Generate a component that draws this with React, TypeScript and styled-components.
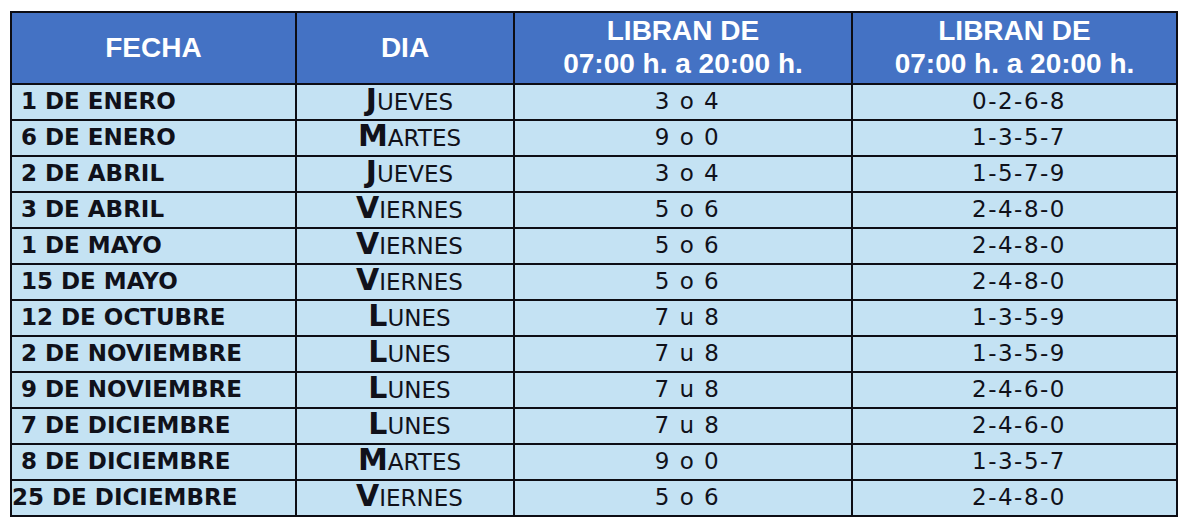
import styled, { createGlobalStyle } from "styled-components";

const GlobalStyle = createGlobalStyle`
  html, body {
    margin: 0;
    padding: 0;
    background: #ffffff;
  }
`;

const Page = styled.div`
  padding: 11px 0 0 10px;
`;

const Table = styled.table`
  border-collapse: collapse;
  table-layout: fixed;
  width: 1166px;
  border: 2px solid #0d0d14;
`;

const Col = styled.col<{ $w: number }>`
  width: ${({ $w }) => $w}px;
`;

const HeadRow = styled.tr`
  height: 72px;
`;

const HeadCell = styled.th`
  background: #4472c4;
  color: #ffffff;
  font-family: "Liberation Sans", Arial, sans-serif;
  font-weight: 700;
  font-size: 28px;
  line-height: 33px;
  text-align: center;
  vertical-align: middle;
  padding: 0 0 2px;
  border: 2px solid #0d0d14;
`;

const Row = styled.tr`
  height: 36px;
`;

const Cell = styled.td<{ $kind: "date" | "day" | "num"; $tight?: boolean }>`
  background: #c4e2f3;
  color: #10111a;
  border: 2px solid #0d0d14;
  padding: 0 0 3px ${({ $tight }) => ($tight ? "0" : "9px")};
  vertical-align: middle;
  white-space: nowrap;
  line-height: 28px;
  font-family: "DejaVu Sans", Tahoma, Verdana, sans-serif;
  text-align: ${({ $kind }) => ($kind === "date" ? "left" : "center")};
  font-weight: ${({ $kind }) => ($kind === "date" ? 700 : 400)};
  font-size: ${({ $kind }) => ($kind === "num" ? "23px" : "23px")};
  letter-spacing: ${({ $kind }) => ($kind === "num" ? "1.5px" : "0")};
`;

const Initial = styled.span`
  font-weight: 700;
  font-size: 30px;
  line-height: 1;
`;

const Rest = styled.span`
  font-size: 23px;
  line-height: 1;
`;

type Holiday = {
  date: string;
  day: string;
  first: string;
  second: string;
};

const holidays: Holiday[] = [
  { date: "1 DE ENERO", day: "JUEVES", first: "3 o 4", second: "0-2-6-8" },
  { date: "6 DE ENERO", day: "MARTES", first: "9 o 0", second: "1-3-5-7" },
  { date: "2 DE ABRIL", day: "JUEVES", first: "3 o 4", second: "1-5-7-9" },
  { date: "3 DE ABRIL", day: "VIERNES", first: "5 o 6", second: "2-4-8-0" },
  { date: "1 DE MAYO", day: "VIERNES", first: "5 o 6", second: "2-4-8-0" },
  { date: "15 DE MAYO", day: "VIERNES", first: "5 o 6", second: "2-4-8-0" },
  { date: "12 DE OCTUBRE", day: "LUNES", first: "7 u 8", second: "1-3-5-9" },
  { date: "2 DE NOVIEMBRE", day: "LUNES", first: "7 u 8", second: "1-3-5-9" },
  { date: "9 DE NOVIEMBRE", day: "LUNES", first: "7 u 8", second: "2-4-6-0" },
  { date: "7 DE DICIEMBRE", day: "LUNES", first: "7 u 8", second: "2-4-6-0" },
  { date: "8 DE DICIEMBRE", day: "MARTES", first: "9 o 0", second: "1-3-5-7" },
  { date: "25 DE DICIEMBRE", day: "VIERNES", first: "5 o 6", second: "2-4-8-0" },
];

function DayName({ name }: { name: string }) {
  return (
    <>
      <Initial>{name.charAt(0)}</Initial>
      <Rest>{name.slice(1)}</Rest>
    </>
  );
}

export default function App() {
  return (
    <>
      <GlobalStyle />
      <Page>
        <Table>
          <colgroup>
            <Col $w={285} />
            <Col $w={218} />
            <Col $w={338} />
            <Col $w={325} />
          </colgroup>
          <thead>
            <HeadRow>
              <HeadCell>FECHA</HeadCell>
              <HeadCell>DIA</HeadCell>
              <HeadCell>
                LIBRAN DE
                <br />
                07:00 h. a 20:00 h.
              </HeadCell>
              <HeadCell>
                LIBRAN DE
                <br />
                07:00 h. a 20:00 h.
              </HeadCell>
            </HeadRow>
          </thead>
          <tbody>
            {holidays.map((h) => (
              <Row key={h.date}>
                <Cell $kind="date" $tight={h.date.startsWith("25")}>
                  {h.date}
                </Cell>
                <Cell $kind="day">
                  <DayName name={h.day} />
                </Cell>
                <Cell $kind="num">{h.first}</Cell>
                <Cell $kind="num">{h.second}</Cell>
              </Row>
            ))}
          </tbody>
        </Table>
      </Page>
    </>
  );
}
